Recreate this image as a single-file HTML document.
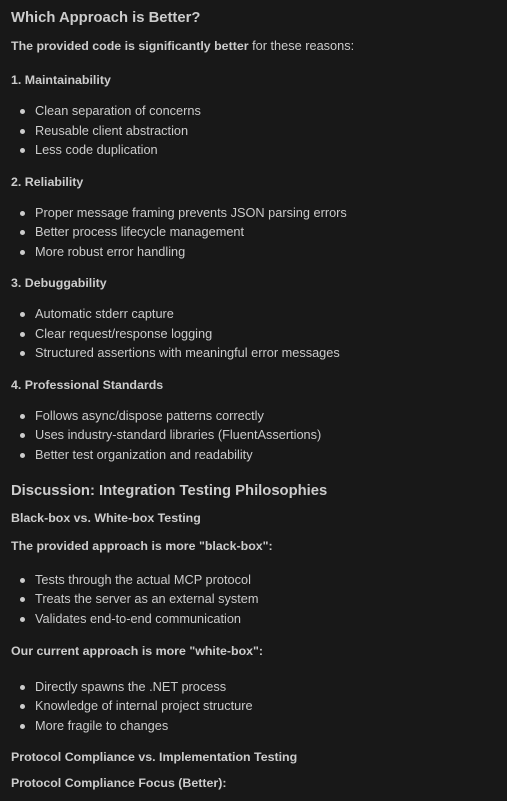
<!DOCTYPE html>
<html><head><style>
html,body{margin:0;padding:0;background:#181818;width:507px;height:801px;overflow:hidden}
body{font-family:"Liberation Sans",sans-serif;color:#cccccc;font-size:12.75px;position:relative}
div{position:absolute;left:11px;white-space:nowrap;line-height:16px}
.h{font-size:14.8px;font-weight:bold;line-height:20px;left:11px}
.b{font-weight:bold;font-size:12.4px}
b{font-size:12.4px}
.li{left:35px}
.li:before{content:"";position:absolute;left:-15px;top:6px;width:5px;height:5px;border-radius:50%;background:#cccccc}
</style></head><body>
<div class="h" style="top:8px">Which Approach is Better?</div>
<div style="top:38px"><b>The provided code is significantly better</b> for these reasons:</div>
<div class="b" style="top:72px">1. Maintainability</div>
<div class="li" style="top:103px">Clean separation of concerns</div>
<div class="li" style="top:123px">Reusable client abstraction</div>
<div class="li" style="top:142px">Less code duplication</div>
<div class="b" style="top:174px">2. Reliability</div>
<div class="li" style="top:205px">Proper message framing prevents JSON parsing errors</div>
<div class="li" style="top:224px">Better process lifecycle management</div>
<div class="li" style="top:244px">More robust error handling</div>
<div class="b" style="top:275px">3. Debuggability</div>
<div class="li" style="top:306px">Automatic stderr capture</div>
<div class="li" style="top:326px">Clear request/response logging</div>
<div class="li" style="top:345px">Structured assertions with meaningful error messages</div>
<div class="b" style="top:377px">4. Professional Standards</div>
<div class="li" style="top:408px">Follows async/dispose patterns correctly</div>
<div class="li" style="top:427px">Uses industry-standard libraries (FluentAssertions)</div>
<div class="li" style="top:447px">Better test organization and readability</div>
<div class="h" style="top:481px">Discussion: Integration Testing Philosophies</div>
<div class="b" style="top:510px">Black-box vs. White-box Testing</div>
<div class="b" style="top:538px">The provided approach is more "black-box":</div>
<div class="li" style="top:572px">Tests through the actual MCP protocol</div>
<div class="li" style="top:591px">Treats the server as an external system</div>
<div class="li" style="top:611px">Validates end-to-end communication</div>
<div class="b" style="top:643px">Our current approach is more "white-box":</div>
<div class="li" style="top:679px">Directly spawns the .NET process</div>
<div class="li" style="top:698px">Knowledge of internal project structure</div>
<div class="li" style="top:718px">More fragile to changes</div>
<div class="b" style="top:749px">Protocol Compliance vs. Implementation Testing</div>
<div class="b" style="top:775px">Protocol Compliance Focus (Better):</div>
</body></html>
